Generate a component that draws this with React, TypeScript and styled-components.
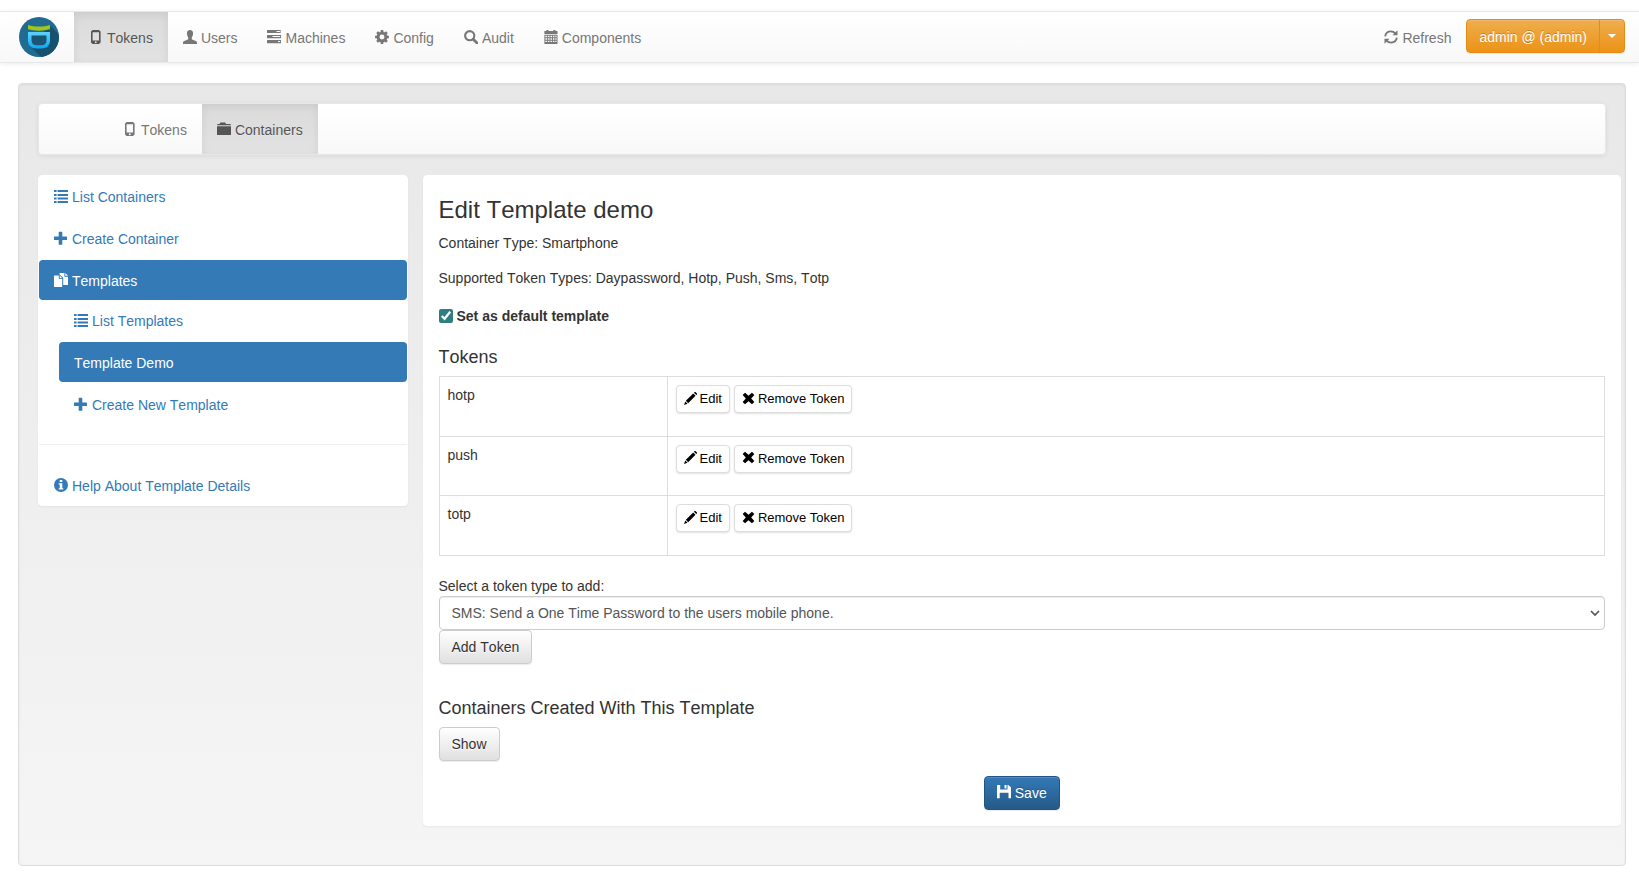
import React, { useState } from "react";
import styled, { createGlobalStyle, css } from "styled-components";

const GlobalStyle = createGlobalStyle`
  *, *::before, *::after { box-sizing: border-box; }
  body {
    margin: 0;
    background: #fff;
    color: #333;
    font-family: "Liberation Sans", Arial, sans-serif;
    font-size: 14px;
    line-height: 20px;
    font-kerning: none;
  }
  button, select, input { font-family: inherit; font-kerning: inherit; margin: 0; }
`;

/* ---------- icons, all on a 14 x 14 grid ---------- */

type IconName =
  | "phone" | "user" | "tasks" | "cog" | "search" | "calendar" | "refresh"
  | "folder" | "list" | "plus" | "copy" | "info" | "pencil" | "remove" | "save";

const shapes: Record<IconName, React.ReactNode> = {
  phone: (
    <path
      fillRule="evenodd"
      d="M3.600 0h6.400L11.600 1.500v11L10 14H3.600L2 12.500v-11zM3.600 2.200v8.300h6.400V2.200zM6.800 11.300a.95.95 0 1 0 0 1.900.95.95 0 0 0 0-1.900z"
    />
  ),
  user: (
    <path d="M7 0C9 0 10.100 1.300 10.100 3.200c0 1.200-.3 2.300-.8 3.200-.4.7-.6 1.100-.6 1.800 0 .8.3 1.200 1 1.500l3 1.300c.9.4 1.300 1 1.300 1.900V14H0v-1.100c0-.9.4-1.500 1.300-1.900l3-1.300c.7-.3 1-.7 1-1.500 0-.7-.2-1.100-.6-1.800-.5-.9-.8-2-.8-3.200C3.900 1.300 5 0 7 0z" />
  ),
  tasks: (
    <path
      fillRule="evenodd"
      d="M.5 0h13.200v3H.5a.5.5 0 0 1-.5-.5v-2A.5.5 0 0 1 .5 0zM9.500 1v1h3.700V1zM.5 5h13.500v3.200H.5a.5.5 0 0 1-.5-.5V5.500A.5.5 0 0 1 .5 5zM5.500 6v1h7.700V6zM.5 10h13.500v3.200H.5a.5.5 0 0 1-.5-.5v-2.200a.5.5 0 0 1 .5-.5zM11 11v1h2.200v-1z"
    />
  ),
  cog: (
    <g>
      <circle cx="7" cy="7" r="3.900" fill="none" stroke="currentColor" strokeWidth="2.900" />
      {[0, 45, 90, 135, 180, 225, 270, 315].map((a) => (
        <path key={a} d="M5.800.1h2.400l.4 2.400H5.400z" transform={`rotate(${a} 7 7)`} />
      ))}
    </g>
  ),
  search: (
    <g fill="none" stroke="currentColor">
      <circle cx="5.700" cy="5.700" r="4.600" strokeWidth="2.100" />
      <path d="M9.200 9.200l3.600 3.600" strokeWidth="2.800" strokeLinecap="round" />
    </g>
  ),
  calendar: (
    <g>
      <path d="M.4 1h2V0h2v1h5V0h2v1h2.100v3H.4z" />
      <path
        fillRule="evenodd"
        d="M.4 4.800h13.100V14H.4zM1.400 5.800v1.400h1.800V5.800zm2.700 0v1.400h1.500V5.800zm2.400 0v1.400H8V5.800zm2.400 0v1.400h1.500V5.800zm2.400 0v1.400h1.300V5.800zM1.400 8.200v1.500h1.800V8.200zm2.700 0v1.500h1.500V8.200zm2.400 0v1.500H8V8.200zm2.400 0v1.500h1.500V8.200zm2.400 0v1.500h1.300V8.200zM1.400 10.700V12h1.800v-1.300zm2.700 0V12h1.500v-1.300zm2.400 0V12H8v-1.300zm2.400 0V12h1.500v-1.300zm2.400 0V12h1.300v-1.300z"
      />
    </g>
  ),
  refresh: (
    <g>
      <path
        d="M1.200 6.300C1.600 3.400 4 1.400 6.900 1.400c1.800 0 3.300.7 4.400 2M12.800 7.700c-.4 2.900-2.800 4.900-5.700 4.900-1.800 0-3.300-.7-4.400-2"
        fill="none"
        stroke="currentColor"
        strokeWidth="1.900"
      />
      <path d="M13.500.3v5H8.500zM.5 13.700v-5h5z" />
    </g>
  ),
  folder: (
    <path d="M.3 2h2.200L3.400.5h4.700L9 2h4.700v1.300H.3zM0 4.200h14V12.500a.5.5 0 0 1-.5.5H.5a.5.5 0 0 1-.5-.5z" />
  ),
  list: (
    <g>
      <path d="M3.600 1H14v2H3.600zM3.600 5H14v2H3.600zM3.600 8.500H14v2H3.600zM3.600 12H14v2H3.600z" />
      <path d="M0 1h2.600v2H0zM0 5h2.600v2H0zM0 8.500h2.600v2H0zM0 12h2.600v2H0z" />
    </g>
  ),
  plus: (
    <path d="M5.300.8h2.400a.6.6 0 0 1 .6.6v4.100h4.100a.6.6 0 0 1 .6.6v2.400a.6.6 0 0 1-.6.6H8.300v4.100a.6.6 0 0 1-.6.6H5.300a.6.6 0 0 1-.6-.6V9.100H.6a.6.6 0 0 1-.6-.6V6.100a.6.6 0 0 1 .6-.6h4.100V1.400a.6.6 0 0 1 .6-.6z" />
  ),
  copy: (
    <g>
      <path d="M.5 2.500h4.300v3.600h3.400v7.400a.5.5 0 0 1-.5.5H.5a.5.5 0 0 1-.5-.5V3a.5.5 0 0 1 .5-.5zM5.700 2.600l2.500 2.600H5.700z" />
      <path d="M5.600 0h4.800v3.700H14v7.800a.5.5 0 0 1-.5.5H9.200V4.700L5.600 1.400zM11.300.1L14 2.800h-2.700z" />
    </g>
  ),
  info: (
    <path
      fillRule="evenodd"
      d="M7 0a7 7 0 1 1 0 14A7 7 0 0 1 7 0zM5.700 2v2.100h2.600V2zM4.700 5.200v1.300h1v3.800h-1v1.300h4.600v-1.300h-1V5.200z"
    />
  ),
  pencil: (
    <path d="M10.700.8l.5-.5a1 1 0 0 1 1.400 0l1.100 1.100a1 1 0 0 1 0 1.400l-.5.5zM9.900 1.600l2.500 2.500-7.900 7.900L2 9.500zM1.400 10.200l2.400 2.400L0 14z" />
  ),
  remove: (
    <path d="M3.300.9L7 4.100 10.700.9l2.600 2.400L9.900 7l3.400 3.700-2.600 2.400L7 9.900l-3.700 3.200L.7 10.700 4.100 7 .7 3.300z" />
  ),
  save: (
    <path
      fillRule="evenodd"
      d="M.5 0h2.700v4.500h7.300V0h.7L14 2.300V13.200h-2.500V7.800H2.700v5.400H0V.5A.5.500 0 0 1 .5 0zM7.500 0h2v3.400h-2z"
    />
  ),
};

/* the bottom margin lifts a centred icon onto the text's baseline */
const Glyph = styled.svg<{ $size: number }>`
  flex: none;
  display: block;
  width: ${(p) => p.$size}px;
  height: ${(p) => p.$size}px;
  margin-bottom: 2px;
  fill: currentColor;
`;

const Icon = ({ name, size = 14 }: { name: IconName; size?: number }) => (
  <Glyph $size={size} viewBox="0 0 14 14" aria-hidden="true">
    {shapes[name]}
  </Glyph>
);

const LogoArt = styled.svg`
  display: block;
  width: 40px;
  height: 40px;
`;

const Logo = () => (
  <LogoArt viewBox="0 0 40 40" role="img" aria-label="privacyIDEA">
    <defs>
      <clipPath id="disc"><circle cx="20" cy="20" r="20" /></clipPath>
      <linearGradient id="cup" x1="0" y1="0" x2="0" y2="1">
        <stop offset="0" stopColor="#5fd0ff" />
        <stop offset="0.5" stopColor="#35c0fb" />
        <stop offset="1" stopColor="#08a8f8" />
      </linearGradient>
    </defs>
    <g clipPath="url(#disc)">
      <rect width="40" height="40" fill="#1f6b92" />
      <path d="M31 8.500L42 19.500V42H24L11 29z" fill="#17516d" />
      <path d="M9 8c7 2 15 2 22 0v4.200c-7 1.900-15 1.900-22 0z" fill="#a2c613" />
      <path d="M9 15h22v8.500c0 5-3.500 8-8.500 8h-5c-5 0-8.500-3-8.500-8z" fill="url(#cup)" />
      <path d="M12.500 18.500h15v5c0 3-2 4.800-5 4.800h-5c-3 0-5-1.800-5-4.800z" fill="#1a5574" />
    </g>
  </LogoArt>
);

/* ---------- navigation bars ---------- */

const barSurface = css`
  background: linear-gradient(to bottom, #fff 0%, #f8f8f8 100%);
  border: 1px solid #e7e7e7;
  box-shadow: inset 0 1px 0 rgba(255, 255, 255, 0.15), 0 1px 5px rgba(0, 0, 0, 0.075);
`;

const TopBar = styled.header`
  ${barSurface}
  border-width: 1px 0;
  display: flex;
  align-items: center;
  min-height: 52px;
  margin: 11px 0 20px;
  padding: 0 14px 0 19px;
`;

const Brand = styled.a`
  display: block;
  margin-right: 15px;
`;

const TabList = styled.nav`
  display: flex;
`;

const tabBase = css`
  display: flex;
  align-items: center;
  gap: 4px;
  height: 50px;
  padding: 2px 15px 0;
  color: #777;
  text-decoration: none;
  text-shadow: 0 1px 0 rgba(255, 255, 255, 0.25);
`;

const Tab = styled.a<{ $active?: boolean }>`
  ${tabBase}
  ${(p) =>
    p.$active &&
    css`
      color: #555;
      background: linear-gradient(to bottom, #dbdbdb 0%, #e2e2e2 100%);
      box-shadow: inset 0 3px 9px rgba(0, 0, 0, 0.075);
    `}
`;

const TopRight = styled.div`
  display: flex;
  align-items: center;
  margin-left: auto;
`;

const RefreshButton = styled.button`
  ${tabBase}
  border: 0;
  background: none;
  font-size: 14px;
  line-height: 20px;
`;

const InnerBar = styled.div`
  ${barSurface}
  border-radius: 4px;
  margin-bottom: 20px;
  padding-left: 69px;
`;

/* ---------- buttons ---------- */

type Kind = "plain" | "primary" | "warning";

const kinds = {
  plain: css`
    color: #333;
    border-color: #ccc;
    background: linear-gradient(to bottom, #fff 0%, #e0e0e0 100%);
    text-shadow: 0 1px 0 #fff;
  `,
  primary: css`
    color: #fff;
    border-color: #245580;
    background: linear-gradient(to bottom, #337ab7 0%, #265a88 100%);
    text-shadow: 0 -1px 0 rgba(0, 0, 0, 0.2);
  `,
  warning: css`
    color: #fff;
    border-color: #e38d13;
    background: linear-gradient(to bottom, #f0ad4e 0%, #eb9316 100%);
    text-shadow: 0 -1px 0 rgba(0, 0, 0, 0.2);
  `,
};

const Button = styled.button<{ $kind?: Kind }>`
  display: inline-flex;
  align-items: center;
  gap: 4px;
  padding: 6px 12px;
  border: 1px solid;
  border-radius: 4px;
  font-size: 14px;
  line-height: 20px;
  box-shadow: inset 0 1px 0 rgba(255, 255, 255, 0.15), 0 1px 1px rgba(0, 0, 0, 0.075);
  ${(p) => kinds[p.$kind ?? "plain"]}
`;

const ButtonGroup = styled.div`
  display: flex;
  margin-bottom: 2px;
  ${Button}:first-child {
    padding: 7px 12px 5px;
    border-radius: 4px 0 0 4px;
  }
  ${Button}:last-child {
    margin-left: -1px;
    padding: 6px 8px;
    border-radius: 0 4px 4px 0;
  }
`;

const Caret = styled.span`
  border-top: 4px solid;
  border-left: 4px solid transparent;
  border-right: 4px solid transparent;
`;

const SmallButton = styled.button`
  display: inline-flex;
  align-items: center;
  gap: 3px;
  padding: 4px 7px;
  border: 1px solid #ddd;
  border-radius: 4px;
  background: #fff;
  color: #000;
  font-size: 13px;
  font-kerning: normal;
  line-height: 18px;
  box-shadow: 0 1px 2px rgba(0, 0, 0, 0.12);
`;

/* ---------- page body ---------- */

const Well = styled.main`
  margin: 0 13px 17px 18px;
  padding: 19px 19px 39px;
  border: 1px solid #dcdcdc;
  border-radius: 4px;
  background: linear-gradient(to bottom, #e8e8e8 0%, #f5f5f5 100%);
  box-shadow: inset 0 1px 3px rgba(0, 0, 0, 0.05);
`;

const Columns = styled.div`
  display: flex;
  align-items: flex-start;
  margin: 0 -15px;
`;

const SideColumn = styled.aside`
  flex: none;
  width: 25%;
  padding: 0 15px;
`;

const Panel = styled.section`
  border: 1px solid #fff;
  border-radius: 4px;
  background: #fff;
  box-shadow: 0 1px 2px rgba(0, 0, 0, 0.05);
`;

const ContentPanel = styled(Panel)`
  flex: 1;
  min-width: 0;
  padding: 20px 15px 15px;
`;

const PillList = styled.ul`
  display: flex;
  flex-direction: column;
  gap: 2px;
  margin: 0;
  padding: 0;
  list-style: none;
  & & {
    padding-left: 20px;
  }
`;

const Pill = styled.a<{ $active?: boolean }>`
  display: flex;
  align-items: center;
  gap: 4px;
  padding: 11px 15px 9px;
  border-radius: 4px;
  color: ${(p) => (p.$active ? "#fff" : "#337ab7")};
  background: ${(p) => (p.$active ? "#337ab7" : "transparent")};
  text-decoration: none;
`;

const Divider = styled.hr`
  margin: 20px 0;
  border: 0;
  border-top: 1px solid #eee;
`;

const Title = styled.h1`
  margin: 0 0 10px;
  font-size: 24px;
  font-weight: 400;
  line-height: 27px;
`;

const Subtitle = styled.h2`
  margin: 0 0 9px;
  padding-top: 1px;
  font-size: 18px;
  font-weight: 400;
  line-height: 20px;
`;

const Info = styled.p`
  margin: 0 0 15px;
`;

const CheckLabel = styled.label`
  display: flex;
  align-items: center;
  gap: 4px;
  margin: 18px 0 20px;
  font-weight: 700;
`;

const CheckBox = styled.input`
  width: 14px;
  height: 14px;
  accent-color: #2f7f80;
`;

const TokenTable = styled.table`
  width: 100%;
  height: 180px;
  margin-bottom: 20px;
  border-collapse: collapse;
  td {
    padding: 8px;
    border: 1px solid #ddd;
    vertical-align: top;
  }
  td:first-child {
    width: 228px;
  }
`;

const Actions = styled.div`
  display: flex;
  gap: 4px;
`;

const FieldLabel = styled.label`
  display: block;
`;

const chevron =
  "data:image/svg+xml,%3Csvg xmlns='http://www.w3.org/2000/svg' width='10' height='7'%3E%3Cpath d='M1 1l4 4 4-4' fill='none' stroke='%23555' stroke-width='1.700'/%3E%3C/svg%3E";

const Select = styled.select`
  appearance: none;
  display: block;
  width: 100%;
  height: 34px;
  padding: 6px 24px 6px 12px;
  border: 1px solid #ccc;
  border-radius: 4px;
  background: #fff url("${chevron}") no-repeat right 4px center;
  color: #555;
  font-size: 14px;
  line-height: 20px;
  box-shadow: inset 0 1px 1px rgba(0, 0, 0, 0.075);
`;

const AddRow = styled.div`
  margin-bottom: 33px;
`;

const SaveRow = styled.div`
  display: flex;
  justify-content: center;
  margin-top: 15px;
`;

const mainTabs: { icon: IconName; text: string; active?: boolean }[] = [
  { icon: "phone", text: "Tokens", active: true },
  { icon: "user", text: "Users" },
  { icon: "tasks", text: "Machines" },
  { icon: "cog", text: "Config" },
  { icon: "search", text: "Audit" },
  { icon: "calendar", text: "Components" },
];

const tokens = ["hotp", "push", "totp"];

export default function App() {
  const [isDefault, setIsDefault] = useState(true);

  return (
    <>
      <GlobalStyle />
      <TopBar>
        <Brand href="#">
          <Logo />
        </Brand>
        <TabList>
          {mainTabs.map((t) => (
            <Tab key={t.text} href="#" $active={t.active}>
              <Icon name={t.icon} />
              {t.text}
            </Tab>
          ))}
        </TabList>
        <TopRight>
          <RefreshButton type="button">
            <Icon name="refresh" />
            Refresh
          </RefreshButton>
          <ButtonGroup>
            <Button type="button" $kind="warning">admin @ (admin)</Button>
            <Button type="button" $kind="warning" aria-label="Account menu">
              <Caret />
            </Button>
          </ButtonGroup>
        </TopRight>
      </TopBar>

      <Well>
        <InnerBar>
          <TabList>
            <Tab href="#">
              <Icon name="phone" />
              Tokens
            </Tab>
            <Tab href="#" $active>
              <Icon name="folder" />
              Containers
            </Tab>
          </TabList>
        </InnerBar>

        <Columns>
          <SideColumn>
            <Panel>
              <PillList>
                <li><Pill href="#"><Icon name="list" />List Containers</Pill></li>
                <li><Pill href="#"><Icon name="plus" />Create Container</Pill></li>
                <li>
                  <Pill href="#" $active><Icon name="copy" />Templates</Pill>
                  <PillList>
                    <li><Pill href="#"><Icon name="list" />List Templates</Pill></li>
                    <li><Pill href="#" $active>Template Demo</Pill></li>
                    <li><Pill href="#"><Icon name="plus" />Create New Template</Pill></li>
                  </PillList>
                </li>
              </PillList>
              <Divider />
              <Pill href="#"><Icon name="info" />Help About Template Details</Pill>
            </Panel>
          </SideColumn>

          <ContentPanel>
            <Title>Edit Template demo</Title>
            <Info>Container Type: Smartphone</Info>
            <Info>Supported Token Types: Daypassword, Hotp, Push, Sms, Totp</Info>
            <CheckLabel>
              <CheckBox
                type="checkbox"
                checked={isDefault}
                onChange={(e) => setIsDefault(e.target.checked)}
              />
              Set as default template
            </CheckLabel>

            <Subtitle>Tokens</Subtitle>
            <TokenTable>
              <tbody>
                {tokens.map((t) => (
                  <tr key={t}>
                    <td>{t}</td>
                    <td>
                      <Actions>
                        <SmallButton type="button">
                          <Icon name="pencil" size={13} />
                          Edit
                        </SmallButton>
                        <SmallButton type="button">
                          <Icon name="remove" size={13} />
                          Remove Token
                        </SmallButton>
                      </Actions>
                    </td>
                  </tr>
                ))}
              </tbody>
            </TokenTable>

            <AddRow>
              <FieldLabel htmlFor="token-type">Select a token type to add:</FieldLabel>
              <Select id="token-type" defaultValue="sms">
                <option value="sms">SMS: Send a One Time Password to the users mobile phone.</option>
              </Select>
              <Button type="button">Add Token</Button>
            </AddRow>

            <Subtitle>Containers Created With This Template</Subtitle>
            <Button type="button">Show</Button>
            <SaveRow>
              <Button type="button" $kind="primary">
                <Icon name="save" />
                Save
              </Button>
            </SaveRow>
          </ContentPanel>
        </Columns>
      </Well>
    </>
  );
}
